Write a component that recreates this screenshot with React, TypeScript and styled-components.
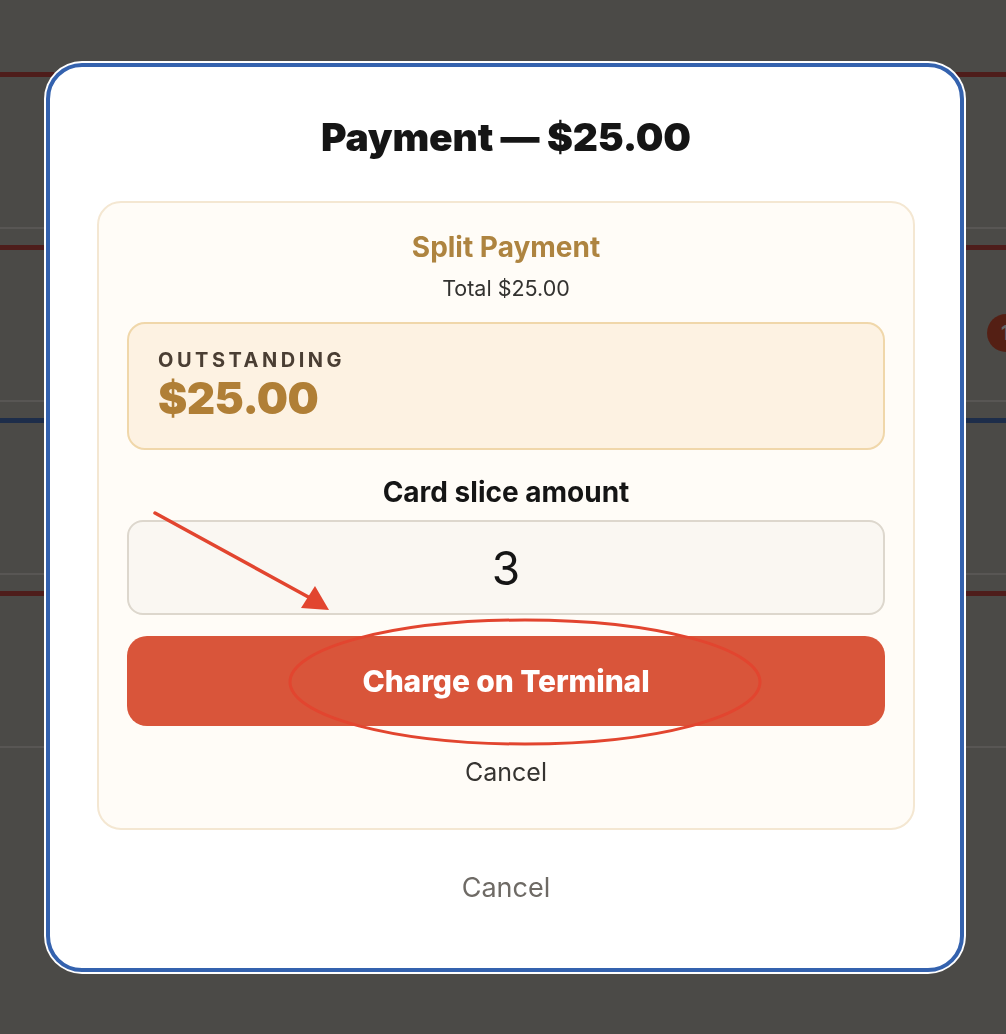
import React from "react";
import styled, { createGlobalStyle } from "styled-components";

const GlobalStyle = createGlobalStyle`
  html, body {
    margin: 0;
    padding: 0;
    overflow: hidden;
  }
  body {
    font-family: Inter, "Noto Sans", "Liberation Sans", sans-serif;
    background: #bcb8b2;
  }
`;

// page behind the dialog
const Page = styled.div`
  width: 1006px;
  height: 1034px;
  overflow: hidden;
  display: flex;
  flex-direction: column;
  gap: 16px;
  padding-top: 72px;
  box-sizing: border-box;
`;

const OrderCard = styled.div<{ $accent: string }>`
  flex: none;
  height: 157px;
  box-sizing: border-box;
  border-top: 5px solid ${(p) => p.$accent};
  border-bottom: 2px solid #dcd8d2;
  display: flex;
  align-items: center;
  justify-content: flex-end;
`;

const Badge = styled.div`
  width: 38px;
  height: 38px;
  border-radius: 50%;
  background: #d24f33;
  color: #fff;
  font-weight: 700;
  font-size: 20px;
  display: flex;
  align-items: center;
  justify-content: flex-start;
  padding-left: 14px;
  box-sizing: border-box;
  margin-right: -19px;
  margin-top: 16px;
`;

const Overlay = styled.div`
  position: fixed;
  inset: 0;
  background: rgba(0, 0, 0, 0.6);
  display: flex;
  justify-content: center;
  align-items: flex-start;
  padding-top: 63px;
  padding-left: 4px;
  box-sizing: border-box;
`;

const Dialog = styled.div`
  width: 918px;
  height: 909px;
  box-sizing: border-box;
  background: #fff;
  border: 4px solid #3462ae;
  box-shadow: 0 0 0 2px #fff;
  border-radius: 36px;
  padding: 48px 45px 0 47px;
  display: flex;
  flex-direction: column;
  align-items: stretch;
`;

const Title = styled.h1`
  margin: 0;
  text-align: center;
  font-size: 39px;
  line-height: 44px;
  font-weight: 900;
  color: #151515;
  letter-spacing: -0.2px;
`;

const SplitCard = styled.div`
  margin-top: 42px;
  height: 629px;
  box-sizing: border-box;
  background: #fffcf7;
  border: 2px solid #f4e7d2;
  border-radius: 24px;
  padding: 28px 28px 0;
  display: flex;
  flex-direction: column;
  align-items: stretch;
`;

const SplitTitle = styled.div`
  text-align: center;
  font-size: 28px;
  line-height: 32px;
  font-weight: 700;
  color: #ae8440;
`;

const SplitTotal = styled.div`
  margin-top: 13px;
  text-align: center;
  font-size: 21.5px;
  line-height: 24px;
  color: #333230;
`;

const Outstanding = styled.div`
  margin-top: 22px;
  height: 128px;
  box-sizing: border-box;
  background: #fdf2e2;
  border: 2px solid #f0d7aa;
  border-radius: 18px;
  padding: 24px 29px 0;
  display: flex;
  flex-direction: column;
`;

const OutstandingLabel = styled.div`
  font-size: 20px;
  line-height: 24px;
  font-weight: 700;
  letter-spacing: 3.5px;
  color: #4a3e33;
`;

const OutstandingValue = styled.div`
  font-size: 44px;
  line-height: 52px;
  font-weight: 900;
  color: #b07f36;
  letter-spacing: -0.6px;
`;

const FieldLabel = styled.label`
  margin-top: 26px;
  text-align: center;
  font-size: 28px;
  line-height: 32px;
  font-weight: 700;
  color: #151515;
`;

const AmountInput = styled.input`
  margin-top: 12px;
  height: 95px;
  box-sizing: border-box;
  background: #faf7f2;
  border: 2px solid #ddd7cd;
  border-radius: 16px;
  text-align: center;
  font-family: inherit;
  font-size: 46px;
  color: #151515;
  outline: none;
`;

const ChargeButton = styled.button`
  margin-top: 21px;
  height: 90px;
  border: none;
  border-radius: 20px;
  background: #d9553a;
  color: #fff;
  font-family: inherit;
  font-size: 30px;
  font-weight: 800;
  letter-spacing: -0.1px;
`;

const TextButton = styled.button<{ $muted?: boolean; $size: number }>`
  align-self: center;
  border: none;
  background: none;
  padding: 0 8px;
  font-family: inherit;
  font-size: ${(p) => p.$size}px;
  line-height: 32px;
  color: ${(p) => (p.$muted ? "#6e6a65" : "#363431")};
`;

const Annotation = styled.svg`
  position: fixed;
  inset: 0;
  width: 1006px;
  height: 1034px;
  pointer-events: none;
`;

export default function App() {
  return (
    <>
      <GlobalStyle />
      <Page>
        <OrderCard $accent="#c24a44" />
        <OrderCard $accent="#c24a44">
          <Badge>1</Badge>
        </OrderCard>
        <OrderCard $accent="#4a70b8" />
        <OrderCard $accent="#c24a44" />
      </Page>
      <Overlay>
        <Dialog>
          <Title>Payment — $25.00</Title>
          <SplitCard>
            <SplitTitle>Split Payment</SplitTitle>
            <SplitTotal>Total $25.00</SplitTotal>
            <Outstanding>
              <OutstandingLabel>OUTSTANDING</OutstandingLabel>
              <OutstandingValue>$25.00</OutstandingValue>
            </Outstanding>
            <FieldLabel>Card slice amount</FieldLabel>
            <AmountInput defaultValue="3" inputMode="decimal" />
            <ChargeButton>Charge on Terminal</ChargeButton>
            <TextButton $size={25} style={{ marginTop: 30 }}>
              Cancel
            </TextButton>
          </SplitCard>
          <TextButton $muted $size={27} style={{ marginTop: 42 }}>
            Cancel
          </TextButton>
        </Dialog>
      </Overlay>
      <Annotation viewBox="0 0 1006 1034">
        <line x1="155" y1="513" x2="312" y2="599" stroke="#e2452f" strokeWidth="3.5" strokeLinecap="round" />
        <polygon points="329,610 301,608 315,586" fill="#e2452f" />
        <ellipse cx="525" cy="682" rx="235" ry="62" fill="none" stroke="#e2452f" strokeWidth="3" />
      </Annotation>
    </>
  );
}
